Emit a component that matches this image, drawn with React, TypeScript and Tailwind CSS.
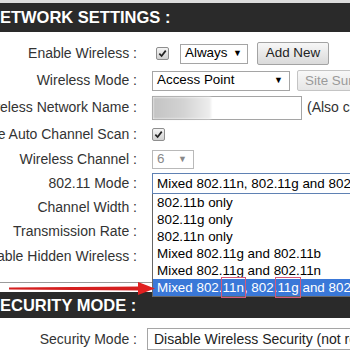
import React from "react";

function Check() {
  return (
    <div className="flex h-[13px] w-[13px] shrink-0 items-center justify-center rounded-[2px] border border-[#8e8e8e] bg-gradient-to-b from-[#f4f4f4] to-[#d0d0d0]">
      <svg viewBox="0 0 10 10" className="h-[9px] w-[9px]">
        <path d="M1.5 5.2 L4 7.8 L8.6 1.8" fill="none" stroke="#222" strokeWidth="1.9" />
      </svg>
    </div>
  );
}

function Label({ text }: { text: string }) {
  return (
    <div className="flex w-[137px] shrink-0 justify-end">
      <span className="whitespace-nowrap text-[14px] text-[#333]">{text}</span>
    </div>
  );
}

function Row({ label, className, children }: { label: string; className: string; children?: React.ReactNode }) {
  return (
    <div className={`flex items-center ${className}`}>
      <Label text={label} />
      {children}
    </div>
  );
}

const items = ["802.11b only", "802.11g only", "802.11n only", "Mixed 802.11g and 802.11b", "Mixed 802.11g and 802.11n"];

export default function App() {
  return (
    <div className="relative h-[350px] w-[350px] overflow-hidden bg-white font-['Liberation_Sans',Arial,sans-serif] text-[13.4px] text-black">
      {/* Network settings header */}
      <div className="h-[3px] bg-[#dcdcdc]" />
      <div className="flex h-[29px] items-center bg-[#2a2a2a]">
        <span className="ml-[-12px] whitespace-nowrap text-[16.5px] font-bold text-white">NETWORK SETTINGS :</span>
      </div>

      <div className="pt-[8px]">
        <Row label="Enable Wireless :" className="h-[27px]">
          <div className="ml-[19px]">
            <Check />
          </div>
          <div className="ml-[11px] flex h-[20px] w-[68px] items-center justify-between border border-[#a5a5a5] pl-[4px] pr-[5px]">
            <span>Always</span>
            <span className="text-[9px]">▼</span>
          </div>
          <button className="ml-[9px] h-[23px] w-[72px] shrink-0 rounded-[2px] border border-[#a3a3a3] bg-gradient-to-b from-[#f7f7f7] to-[#dadada] text-[13.4px] text-[#222]">
            Add New
          </button>
        </Row>

        <Row label="Wireless Mode :" className="h-[27px]">
          <div className="ml-[15px] flex h-[20px] w-[138px] shrink-0 items-center justify-between border border-[#a5a5a5] pl-[4px] pr-[6px]">
            <span>Access Point</span>
            <span className="text-[9px]">▼</span>
          </div>
          <button className="ml-[7px] h-[21px] w-[80px] shrink-0 whitespace-nowrap rounded-[2px] border border-[#c4c4c4] bg-gradient-to-b from-[#f8f8f8] to-[#e6e6e6] pl-[7px] text-left text-[13.4px] text-[#9a9a9a]">
            Site Survey
          </button>
        </Row>

        <Row label="Wireless Network Name :" className="h-[27px]">
          <div className="ml-[15px] flex h-[24px] w-[150px] shrink-0 items-stretch border border-[#a5a5a5]">
            <div className="w-[58px] bg-gradient-to-r from-[#c4c4c4] via-[#d2d2d2] to-[#efefef] blur-[1px]" />
          </div>
          <span className="ml-[5px] whitespace-nowrap text-[14px] text-[#333]">(Also called the SSID)</span>
        </Row>

        <Row label="Enable Auto Channel Scan :" className="h-[26px]">
          <div className="ml-[15px]">
            <Check />
          </div>
        </Row>

        <Row label="Wireless Channel :" className="h-[25px]">
          <div className="ml-[15px] flex h-[19px] w-[42px] shrink-0 items-center justify-between border border-[#b9b9b9] pl-[4px] pr-[6px] text-[#888]">
            <span>6</span>
            <span className="text-[9px]">▼</span>
          </div>
        </Row>

        <Row label="802.11 Mode :" className="h-[23px]">
          <div className="relative ml-[15px] h-[21px] w-[215px] shrink-0">
            <div className="h-full whitespace-nowrap border border-[#5f81b3] pl-[4px] leading-[19px]">
              Mixed 802.11n, 802.11g and 802.11b
            </div>
            {/* open option list */}
            <div className="absolute left-0 top-full z-10 w-full border border-t-0 border-[#666] bg-white">
              {items.map((t) => (
                <div key={t} className="h-[17px] whitespace-nowrap pl-[4px] leading-[17px]">
                  {t}
                </div>
              ))}
              <div className="h-[17px] whitespace-nowrap bg-[#3a78d8] pl-[4px] leading-[17px] text-white">
                Mixed 802.
                <span className="relative">
                  11n
                  <span className="absolute -inset-x-[2px] -inset-y-[3px] border border-[#d4587a]" />
                </span>
                , 802.
                <span className="relative">
                  11g
                  <span className="absolute -inset-x-[2px] -inset-y-[3px] border border-[#d4587a]" />
                </span>
                {" and 802.11b"}
              </div>
            </div>
          </div>
        </Row>

        <Row label="Channel Width :" className="h-[24px]" />
        <Row label="Transmission Rate :" className="h-[24px]" />
        <Row label="Enable Hidden Wireless :" className="h-[26px]" />

        <div className="h-[14px] border-b border-[#9a9a9a]" />
        <div className="h-[9px]" />
      </div>

      {/* Security mode header */}
      <div className="flex h-[26px] items-center bg-[#2a2a2a]">
        <span className="ml-[-11px] whitespace-nowrap text-[16.5px] font-bold text-white">SECURITY MODE :</span>
      </div>

      <div className="flex items-center pt-[10px]">
        <Label text="Security Mode :" />
        <div className="ml-[10px] flex h-[22px] w-[230px] shrink-0 items-center whitespace-nowrap border border-[#a5a5a5] pl-[6px] text-[14px] text-[#222]">
          Disable Wireless Security (not recommended)
        </div>
      </div>

      {/* red pointer arrow */}
      <svg className="absolute left-[9px] top-[282px] z-20 h-[13px] w-[146px]" viewBox="0 0 146 13">
        <path d="M0 5.5 L131 4.5 L131 8.5 L0 7.5 Z" fill="#d51f1f" />
        <path d="M129 0 L146 6.5 L129 13 Z" fill="#e02020" />
      </svg>
    </div>
  );
}
